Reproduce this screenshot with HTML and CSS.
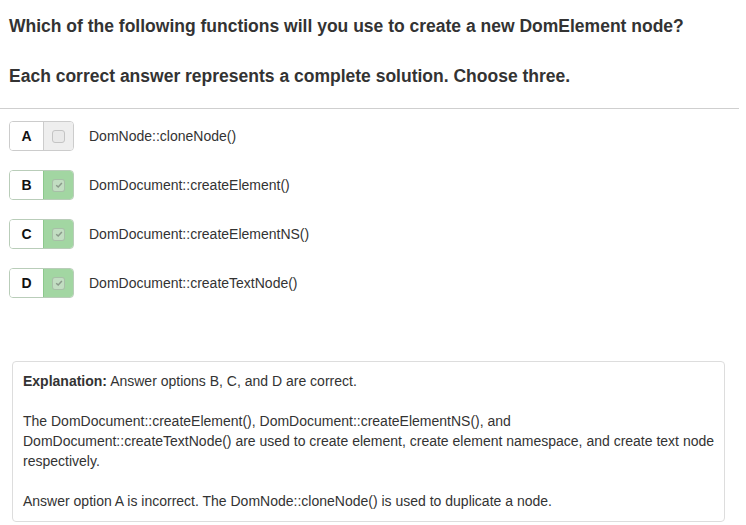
FILE: index.html
```html
<!DOCTYPE html>
<html lang="en">
<head>
<meta charset="utf-8">
<title>Question</title>
<link rel="stylesheet" href="styles.css">
</head>
<body>
<div class="question">
  <p class="q-title">Which of the following functions will you use to create a new DomElement node?</p>
  <p class="q-title q-sub">Each correct answer represents a complete solution. Choose three.</p>
</div>
<hr class="sep">
<ul class="options">
  <li class="option">
    <span class="choice"><span class="letter">A</span><span class="box"><span class="cb"></span></span></span>
    <span class="opt-text">DomNode::cloneNode()</span>
  </li>
  <li class="option">
    <span class="choice"><span class="letter">B</span><span class="box checked"><span class="cb"><svg viewBox="0 0 10 10" width="8" height="8"><path d="M1.5 5.2 L4 7.6 L8.6 2.4" fill="none" stroke="#8a9a8a" stroke-width="1.8"/></svg></span></span></span>
    <span class="opt-text">DomDocument::createElement()</span>
  </li>
  <li class="option">
    <span class="choice"><span class="letter">C</span><span class="box checked"><span class="cb"><svg viewBox="0 0 10 10" width="8" height="8"><path d="M1.5 5.2 L4 7.6 L8.6 2.4" fill="none" stroke="#8a9a8a" stroke-width="1.8"/></svg></span></span></span>
    <span class="opt-text">DomDocument::createElementNS()</span>
  </li>
  <li class="option">
    <span class="choice"><span class="letter">D</span><span class="box checked"><span class="cb"><svg viewBox="0 0 10 10" width="8" height="8"><path d="M1.5 5.2 L4 7.6 L8.6 2.4" fill="none" stroke="#8a9a8a" stroke-width="1.8"/></svg></span></span></span>
    <span class="opt-text">DomDocument::createTextNode()</span>
  </li>
</ul>
<div class="explanation">
  <p><b>Explanation:</b> Answer options B, C, and D are correct.</p>
  <p>The DomDocument::createElement(), DomDocument::createElementNS(), and<br>DomDocument::createTextNode() are used to create element, create element namespace, and create text node<br>respectively.</p>
  <p>Answer option A is incorrect. The DomNode::cloneNode() is used to duplicate a node.</p>
</div>
</body>
</html>
```
FILE: styles.css
```css
html, body {
  margin: 0;
  padding: 0;
  background: #fff;
}
body {
  font-family: "Liberation Sans", Arial, sans-serif;
  font-size: 14px;
  color: #333;
  width: 746px;
}
.question {
  padding: 12px 9px 0 9px;
}
.q-title {
  margin: 0;
  font-size: 17.5px;
  font-weight: bold;
  line-height: 28px;
}
.q-sub {
  margin-top: 22px;
}
.sep {
  margin: 18px 7px 0 0;
  border: 0;
  border-top: 1px solid #cfcfcf;
  height: 0;
}
.options {
  list-style: none;
  margin: 12px 0 0 9px;
  padding: 0;
  display: flex;
  flex-direction: column;
  gap: 19px;
}
.option {
  display: flex;
  align-items: center;
  height: 30px;
}
.choice {
  display: flex;
  height: 28px;
  border: 1px solid #ccc;
  border-radius: 4px;
  overflow: hidden;
}
.letter {
  width: 33px;
  display: flex;
  align-items: center;
  justify-content: center;
  font-weight: bold;
  font-size: 14px;
  color: #111;
  background: #fff;
}
.box {
  width: 29px;
  border-left: 1px solid #ccc;
  background: #eee;
  display: flex;
  align-items: center;
  justify-content: center;
}
.box.checked {
  background: #a2d6a2;
  border-left-color: #8cc88c;
}
.choice:has(.checked) {
  border-color: #b9cdb9;
}
.cb {
  width: 11px;
  height: 11px;
  border: 1px solid #c4c4c4;
  border-radius: 3px;
  background: #e9e9e9;
  display: flex;
  align-items: center;
  justify-content: center;
}
.checked .cb {
  background: rgba(220, 228, 220, 0.55);
  border-color: rgba(150, 170, 150, 0.6);
}
.opt-text {
  margin-left: 15px;
  font-size: 14px;
}
.explanation {
  margin: 63px 0 0 12px;
  width: 701px;
  padding: 9px 0 10px 10px;
  border: 1px solid #ddd;
  border-radius: 4px;
  line-height: 20px;
  font-size: 14px;
  white-space: nowrap;
}
.explanation p {
  margin: 0 0 20px 0;
}
.explanation p:last-child {
  margin-bottom: 0;
}
.explanation b {
  color: #333;
}
```
